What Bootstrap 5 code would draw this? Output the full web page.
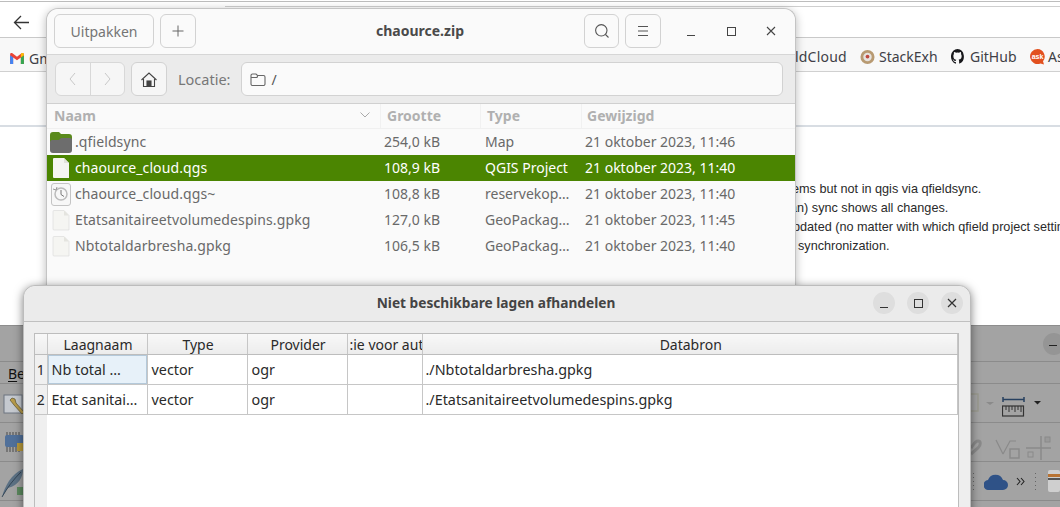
<!DOCTYPE html>
<html lang="nl">
<head>
<meta charset="utf-8">
<title>chaource.zip</title>
<link href="https://cdn.jsdelivr.net/npm/bootstrap@5.3.0/dist/css/bootstrap.min.css" rel="stylesheet">
<style>
html,body{margin:0;background:#fff;overflow:hidden}
.desk{position:relative;width:1060px;height:507px;overflow:hidden;font-family:"Noto Sans",sans-serif;font-size:14px;color:#3d3d3d}
.b-top{margin-top:1px;height:37px;border-top:1px solid #bdbdbd;background:#fff;border-bottom:1px solid #c9c9c9;padding-left:13px;padding-top:13px}
.b-top svg{display:block}
.b-line{position:absolute;left:225px;right:0;top:6px;height:1px;background:#cfcfcf}
.b-marks{height:34px;background:#f8f8f8;border-bottom:1px solid #d0d0d0;font-size:14px;color:#3f3f46;padding-left:795px;padding-top:4px}
.b-gm{position:absolute;left:10px;top:48px;gap:5px;font-size:14px;color:#3f3f46}
.b-mk{white-space:nowrap;flex:none}
.mk-cloud{width:65px;letter-spacing:.2px}
.mk-stack{width:91px;gap:4px}
.mk-git{width:78px;gap:6px}
.mk-ask{gap:2px}
.b-page{height:55px;background:#fff;border-bottom:2px solid #d8dde3}
.b-text{font-family:"Liberation Sans",sans-serif;font-size:12.67px;line-height:19px;color:#2a2a2a;padding:53px 0 0 790px;white-space:nowrap;height:198px;background:#fff;overflow:hidden}
.l1{margin-left:2px}.l3{margin-left:3px}.l4{margin-left:8px}
.qg{position:absolute;left:0;right:0;top:325px;bottom:0;background:#a3a3a3;border-top:1px solid #8d8d8d}
.qg-row{position:absolute;left:0;right:0;height:1px;background:#8b8b8b}
.r1{top:35px}.r2{top:57px}.r3{top:96px}.r4{top:135px}.r5{top:174px}
.qg-ic{position:absolute}
.ic-tool{left:3px;top:67px}.ic-chip{left:4px;top:105px}.ic-feather{left:1px;top:143px}
.ic-frame{left:969px;top:66px}.ic-ruler{left:1002px;top:70px}.ic-edit{left:971px;top:108px}
.ic-cloud{left:984px;top:147px}.ic-more{left:1016px;top:151px}.ic-dots{left:972px;top:146px}.ic-next{left:1048px;top:143px}
.qg-be{position:absolute;left:8px;top:37px;font-size:14px;color:#111}
.qg-be u{text-decoration-thickness:1px;text-underline-offset:2px}
.qg-min{position:absolute;left:1043px;top:7px;width:22px;height:22px;border-radius:50%;background:#959595}
.qg-min::after{content:"";position:absolute;left:6px;top:12px;width:8px;height:1px;background:#222}
.arch{position:absolute;left:46px;top:8px;width:750px;height:290px;background:#fafafa;border:1px solid #c4c4c4;border-bottom:0;border-radius:12px 12px 0 0;box-shadow:0 2px 10px rgba(0,0,0,.28)}
.a-head{height:46px;border-bottom:1px solid #d6d6d6;padding:5px 4px 0 7px;background:#fafafa;border-radius:12px 12px 0 0}
.a-btn{height:34px;min-width:35px;padding:0;border:1px solid #d2d2d2;border-radius:6px;background:#fafafa;color:#757575;font-size:14px;display:flex;align-items:center;justify-content:center}
.a-wide{width:100px}.a-36{width:36px}.a-gap{margin-left:6px}
.a-home{margin-left:6px;background:#f6f6f6}
.a-title{position:absolute;left:0;right:2px;top:12px;text-align:center;font-weight:700;font-size:14px;color:#4a4a4a;line-height:20px}
.a-wc{width:40px;display:flex;justify-content:center;align-items:center;height:34px}
.a-wc1{margin-left:10px}
.a-tool{height:49px;background:#ebebeb;border-bottom:1px solid #d0d0d0;padding:7px 12px 0 8px;color:#777}
.a-grp{display:flex;width:70px;height:34px;border:1px solid #d8d8d8;border-radius:6px;background:#f6f6f6}
.a-grp span{flex:1;display:flex;align-items:center;justify-content:center}
.a-grp span+span{border-left:1px solid #d8d8d8}
.a-lbl{line-height:34px;margin:0 10px 0 11px;color:#777;font-size:14.5px}
.a-loc{flex:1;height:34px;border:1px solid #d2d2d2;border-radius:6px;background:#fafafa;padding-left:8px;gap:6px;color:#555}
.f-grid{display:grid;grid-template-columns:333px 100px 101px 1fr;align-items:center}
.f-head{height:25px;background:#fafafa;border-bottom:1px solid #f0f0f0;font-weight:700;color:#b0b0b0;font-size:14px}
.f-head>div{height:100%;display:flex;align-items:center;padding-left:6px;padding-bottom:2px;border-left:1px solid #f1f1f1}
.f-head>div:first-child{padding-left:7px;border-left:0;justify-content:space-between;padding-right:10px}
.f-head>div:last-child{padding-left:5px}
.f-row{height:26px;color:#696969;background:#fafafa;white-space:nowrap;padding-bottom:2px}
.f-row.on{background:#4b8501;color:#fff}
.f-name{display:flex;align-items:center;gap:2px;padding-left:2px;height:24px;letter-spacing:.1px}
.f-ic{width:24px;height:24px;flex:none;margin-top:2px}
.f-size{text-align:right;padding-right:40px}
.f-type{padding-left:5px}
.f-date{padding-left:4px}
.dlg{position:absolute;left:23px;top:285px;width:948px;height:230px;background:#eeeeee;border:1px solid #bcbcbc;border-radius:12px 12px 0 0;box-shadow:0 2px 10px rgba(0,0,0,.5)}
.d-head{height:36px;background:#ebebeb;border-bottom:1px solid #c0c0c0;border-radius:12px 12px 0 0;position:relative}
.d-title{text-align:center;font-weight:700;font-size:13.7px;line-height:33px;color:#444;padding-right:2px}
.d-btns{position:absolute;right:7px;top:6px;gap:12px}
.d-btn{width:22px;height:22px;border-radius:50%;background:#dedede;display:flex;align-items:center;justify-content:center}
.d-frame{margin:11px 11px 0 10px;height:190px;background:#fff;border:1px solid #bdbdbd;position:relative}
.d-strip{position:absolute;left:0;top:20px;bottom:0;width:12px;background:#efefef}
.d-tb{position:relative;table-layout:fixed;border-collapse:collapse;width:923px;font-size:14.35px;color:#222}
.d-tb th{height:20px;padding:2px 0 0 2px;font-size:14px;font-weight:400;text-align:center;border-right:1px solid #c6c6c6;border-bottom:1px solid #bdbdbd;background:linear-gradient(#f8f8f8,#ececec);white-space:nowrap;overflow:hidden;color:#2a2a2a;line-height:18px}
.d-tb td{height:30px;padding:0 3px 0 4px;border-right:1px solid #c6c6c6;border-bottom:1px solid #c6c6c6;white-space:nowrap;overflow:hidden;color:#2a2a2a;background:#fff}
.d-tb td:last-child{padding-left:3px}
.d-tb td.rh{background:#f0f0f0;padding:0;text-align:center;font-size:14px}
.d-tb td.sel{background:#e7f1f9;box-shadow:inset 0 0 0 1px #b4c9da}
.c-rh{width:12px}.c-100{width:100px}.c-75{width:75px}
.d-clip{display:block;overflow:hidden;white-space:nowrap;text-align:center}
</style>
</head>
<body>
<div class="desk">
  <div class="b-top">
    <svg width="17" height="15" viewBox="0 0 17 15" fill="none" stroke="#333" stroke-width="1.3"><path d="M16 7.5H2M8 1 1.5 7.5 8 14"/></svg>
  </div>
  <div class="b-line"></div>
  <div class="b-marks d-flex align-items-center">
    <span class="b-mk mk-cloud">ldCloud</span>
    <span class="b-mk mk-stack d-flex align-items-center">
      <svg width="15" height="16" viewBox="0 0 16 16"><circle cx="8" cy="8" r="7.5" fill="#b89a72"/><circle cx="8" cy="8" r="4.5" fill="#e6e3df"/><circle cx="8" cy="7.5" r="2" fill="#c0493f"/></svg>StackExh</span>
    <span class="b-mk mk-git d-flex align-items-center">
      <svg width="13" height="15" viewBox="0 0 16 16" fill="#18181b" preserveAspectRatio="none"><path d="M8 0a8 8 0 0 0-2.500 15.600c.4.100.5-.2.5-.4v-1.400c-2.200.5-2.700-1-2.700-1-.4-.9-.9-1.200-.9-1.200-.7-.5.100-.5.100-.5.800.100 1.200.800 1.200.800.700 1.200 1.900.900 2.300.700.100-.5.300-.9.500-1.100-1.800-.2-3.600-.9-3.600-4 0-.9.300-1.600.800-2.100-.1-.2-.4-1 .100-2.100 0 0 .700-.2 2.200.800a7.600 7.600 0 0 1 4 0c1.500-1 2.200-.8 2.200-.8.400 1.100.200 1.900.100 2.100.500.600.800 1.300.800 2.100 0 3.100-1.900 3.700-3.700 3.900.300.300.600.800.600 1.500v2.200c0 .200.100.500.600.400A8 8 0 0 0 8 0z"/></svg>GitHub</span>
    <span class="b-mk mk-ask d-flex align-items-center">
      <svg width="17" height="17" viewBox="0 0 17 17"><path d="M8.500 1a7.500 7.500 0 1 0 3 14.400l3.500 1-1-3.200A7.500 7.500 0 0 0 8.500 1z" fill="#e2501f"/><text x="8.500" y="11" font-size="7" font-weight="700" fill="#fff" text-anchor="middle" font-family="Liberation Sans, sans-serif">ask</text></svg>As</span>
  </div>
  <div class="b-gm d-flex align-items-center">
    <svg width="14" height="11" viewBox="0 0 15 12"><path d="M0 1.500V12h3.300V5L7.500 8 11.700 5v7H15V1.500C15 .2 13.500-.4 12.500.4L7.500 4 2.500.4C1.500-.4 0 .2 0 1.500z" fill="#ea4335"/><path d="M0 1.500V12h3.300V5L0 2.500z" fill="#4285f4"/><path d="M11.700 12H15V2.500L11.700 5z" fill="#34a853"/><path d="M11.700 5 15 2.500v-1C15 .2 13.500-.4 12.500.4l-.8.600z" fill="#fbbc04"/></svg>
    <span>Gm</span>
  </div>
  <div class="b-page"></div>
  <div class="b-text">
    <div class="l1">ems but not in qgis via qfieldsync.</div>
    <div>an) sync shows all changes.</div>
    <div class="l3">pdated (no matter with which qfield project settin</div>
    <div class="l4">synchronization.</div>
  </div>

  <div class="qg">
    <div class="qg-min"></div>
    <div class="qg-row r1"></div>
    <div class="qg-row r2"></div>
    <div class="qg-row r3"></div>
    <div class="qg-row r4"></div>
    <div class="qg-row r5"></div>
    <div class="qg-be"><u>B</u>e</div>
    <svg class="qg-ic ic-tool" width="22" height="24" viewBox="0 0 22 24"><rect x="1" y="2" width="18" height="18" fill="#c5c9cf" stroke="#6d7480"/><path d="M7 7l4 5 8 9 2-2-8-9-1-4-3-1z" fill="#b79b4a" stroke="#5c5330" stroke-width=".7"/></svg>
    <svg class="qg-ic ic-chip" width="20" height="24" viewBox="0 0 20 24"><path d="M3 1v20M6 1v20M9 1v20M12 1v20M15 1v20" stroke="#333" stroke-width=".8"/><rect x="1" y="4" width="19" height="12" rx="2" fill="#50709a"/><rect x="13" y="12" width="7" height="8" fill="#b99a3a"/></svg>
    <svg class="qg-ic ic-feather" width="22" height="32" viewBox="0 0 22 32"><path d="M1 28C4 17 10 5 22 0c0 8-4 16-15 19z" fill="#5c7184"/><path d="M1 28C6 19 12 11 20 3" stroke="#2a3a4a" stroke-width=".8" fill="none"/><rect x="16" y="18" width="6" height="8" fill="#5c8a5f"/></svg>
    <svg class="qg-ic ic-frame" width="32" height="24" viewBox="0 0 32 24" fill="none"><rect x="0" y="2" width="9" height="17" stroke="#9a9a8f" stroke-width="1.500"/><path d="M17 10h8l-4 3z" fill="#8a8a8a"/></svg>
    <svg class="qg-ic ic-ruler" width="40" height="22" viewBox="0 0 40 22"><path d="M1 1v5M22 1v5M1 3.500h21" stroke="#27405f" stroke-width="1.500"/><rect x="0.500" y="10" width="21" height="10" fill="none" stroke="#333" stroke-width="1.200"/><path d="M4 10v4M7 10v6M10 10v4M13 10v6M16 10v4M19 10v6" stroke="#333"/><path d="M32 5h7l-3.500 3.500z" fill="#222"/></svg>
    <svg class="qg-ic ic-edit" width="90" height="30" viewBox="0 0 90 30" fill="none" stroke="#8a8a8a"><path d="M0 14c3-4 4-7 7-7 3 0 3 4 0 7l-7 6" stroke-width="3"/><path d="M25 6l7 14M32 20l7-13h6" stroke-width="1.200"/><rect x="39" y="15" width="9" height="9" stroke-width="1.500"/><path d="M70 2v24M55 14h25" stroke-width="1.500"/><rect x="74" y="3" width="5" height="5" fill="#999"/><rect x="57" y="18" width="5" height="5"/></svg>
    <svg class="qg-ic ic-cloud" width="24" height="17" viewBox="0 0 24 17"><path d="M5 17a5 5 0 0 1-1-10 8 8 0 0 1 15 0 5 5 0 0 1 0 10z" fill="#2f5287"/></svg>
    <svg class="qg-ic ic-more" width="9" height="9" viewBox="0 0 9 9" fill="none" stroke="#222" stroke-width="1.100"><path d="M1 1l3 3.500L1 8M5 1l3 3.500L5 8"/></svg>
    <svg class="qg-ic ic-dots" width="68" height="20" viewBox="0 0 68 20" fill="#666"><path d="M1 1h1v1H1zM1 5h1v1H1zM1 9h1v1H1zM1 13h1v1H1zM1 17h1v1H1zM63 1h1v1h-1zM63 5h1v1h-1zM63 9h1v1h-1zM63 13h1v1h-1zM63 17h1v1h-1z"/></svg>
    <svg class="qg-ic ic-next" width="12" height="24" viewBox="0 0 12 24"><rect x="0" y="1" width="12" height="22" rx="2" fill="#cfcfcf"/><rect x="0" y="5" width="12" height="3" fill="#b87333"/><rect x="0" y="9" width="12" height="2" fill="#555"/></svg>
  </div>

  <section class="arch">
    <div class="a-head d-flex position-relative">
      <div class="a-title">chaource.zip</div>
      <button class="btn a-btn a-wide position-relative">Uitpakken</button>
      <button class="btn a-btn a-36 a-gap position-relative"><svg width="12" height="12" viewBox="0 0 12 12" stroke="#666"><path d="M6 .5v11M.5 6h11"/></svg></button>
      <div class="ms-auto d-flex position-relative">
        <button class="btn a-btn"><svg width="16" height="16" viewBox="0 0 16 16" fill="none" stroke="#555" stroke-width="1.100"><circle cx="7.300" cy="7.300" r="5.700"/><path d="M11.500 11.500 14.500 14.500"/></svg></button>
        <button class="btn a-btn a-36 a-gap"><svg width="12" height="10" viewBox="0 0 12 10" stroke="#555"><path d="M1 .5h10M1 5h10M1 9.500h10"/></svg></button>
        <div class="a-wc a-wc1"><svg width="10" height="10" viewBox="0 0 10 10" stroke="#444"><path d="M1 9.500h8"/></svg></div>
        <div class="a-wc"><svg width="9" height="9" viewBox="0 0 9 9" fill="none" stroke="#444"><rect x=".5" y=".5" width="8" height="8"/></svg></div>
        <div class="a-wc"><svg width="10" height="10" viewBox="0 0 10 10" stroke="#444" stroke-width="1.100"><path d="M1 1l8 8M9 1l-8 8"/></svg></div>
      </div>
    </div>
    <div class="a-tool d-flex align-items-start">
      <div class="a-grp"><span><svg width="7" height="14" viewBox="0 0 7 14" fill="none" stroke="#c8c8c8"><path d="M6 1 1 7l5 6"/></svg></span><span><svg width="7" height="14" viewBox="0 0 7 14" fill="none" stroke="#c8c8c8"><path d="M1 1l5 6-5 6"/></svg></span></div>
      <button class="btn a-btn a-36 a-home"><svg width="16" height="15" viewBox="0 0 16 15" fill="none" stroke="#444" stroke-width="1.100"><path d="M.5 8 8 1l7.500 7M2.500 7v7.500h11V7"/><rect x="6" y="9" width="4" height="5.500" fill="#444"/></svg></button>
      <span class="a-lbl">Locatie:</span>
      <div class="a-loc d-flex align-items-center"><svg width="16" height="13" viewBox="0 0 16 13" fill="none" stroke="#666" stroke-width="1.100"><path d="M1 2.500A1.500 1.500 0 0 1 2.500 1H6l1.500 1.500h6A1.500 1.500 0 0 1 15 4v7a1.500 1.500 0 0 1-1.500 1.500h-11A1.500 1.500 0 0 1 1 11z"/><path d="M1 4.500h6l.8-2"/></svg><span>/</span></div>
    </div>
    <div class="f-grid f-head"><div>Naam<svg width="10" height="6" viewBox="0 0 10 6" fill="none" stroke="#aaa"><path d="M.5.500 5 5 9.500.5"/></svg></div><div>Grootte</div><div>Type</div><div>Gewijzigd</div></div>
    <div class="f-grid f-row">
      <div class="f-name"><svg class="f-ic" viewBox="0 0 24 24"><path d="M1 5a3 3 0 0 1 3-3h6l2 2h8a3 3 0 0 1 3 3v6H1z" fill="#5a8a1c"/><path d="M1 12c0-1 1-2 2-2h6c2 0 2-2 4-2h8a2 2 0 0 1 2 2v10a3 3 0 0 1-3 3H4a3 3 0 0 1-3-3z" fill="#6d6d6d"/></svg><span>.qfieldsync</span></div>
      <div class="f-size">254,0 kB</div><div class="f-type">Map</div><div class="f-date">21 oktober 2023, 11:46</div>
    </div>
    <div class="f-grid f-row on">
      <div class="f-name"><svg class="f-ic" viewBox="0 0 24 24"><path d="M5 2h10l5 5v15H5a1 1 0 0 1-1-1V3a1 1 0 0 1 1-1z" fill="#f5f5f1"/><path d="M15 2l5 5h-5z" fill="#e2e2dc"/></svg><span>chaource_cloud.qgs</span></div>
      <div class="f-size">108,9 kB</div><div class="f-type">QGIS Project</div><div class="f-date">21 oktober 2023, 11:40</div>
    </div>
    <div class="f-grid f-row">
      <div class="f-name"><svg class="f-ic" viewBox="0 0 24 24" fill="none"><rect x="2.500" y="1.500" width="19" height="22" rx="2.500" fill="#f7f7f7" stroke="#c4c4c4"/><circle cx="12" cy="12" r="6" stroke="#bbb" stroke-width="1.500"/><path d="M12 8v4.500l3 2" stroke="#777"/><path d="M4 7l3 1 1-3" stroke="#999"/></svg><span>chaource_cloud.qgs~</span></div>
      <div class="f-size">108,8 kB</div><div class="f-type">reservekop…</div><div class="f-date">21 oktober 2023, 11:40</div>
    </div>
    <div class="f-grid f-row">
      <div class="f-name"><svg class="f-ic" viewBox="0 0 24 24"><path d="M5 2.500h10l5 5V22H5a1 1 0 0 1-1-1V3.500a1 1 0 0 1 1-1z" fill="#f5f5f2" stroke="#dcdcdc" stroke-width=".7"/><path d="M15 2.500l5 5h-5z" fill="#e4e4df"/></svg><span>Etatsanitaireetvolumedespins.gpkg</span></div>
      <div class="f-size">127,0 kB</div><div class="f-type">GeoPackag…</div><div class="f-date">21 oktober 2023, 11:45</div>
    </div>
    <div class="f-grid f-row">
      <div class="f-name"><svg class="f-ic" viewBox="0 0 24 24"><path d="M5 2.500h10l5 5V22H5a1 1 0 0 1-1-1V3.500a1 1 0 0 1 1-1z" fill="#f5f5f2" stroke="#dcdcdc" stroke-width=".7"/><path d="M15 2.500l5 5h-5z" fill="#e4e4df"/></svg><span>Nbtotaldarbresha.gpkg</span></div>
      <div class="f-size">106,5 kB</div><div class="f-type">GeoPackag…</div><div class="f-date">21 oktober 2023, 11:40</div>
    </div>
  </section>

  <section class="dlg">
    <div class="d-head">
      <div class="d-title">Niet beschikbare lagen afhandelen</div>
      <div class="d-btns d-flex">
        <div class="d-btn"><svg width="10" height="10" viewBox="0 0 10 10" stroke="#333"><path d="M1 9.500h8"/></svg></div>
        <div class="d-btn"><svg width="9" height="9" viewBox="0 0 9 9" fill="none" stroke="#333"><rect x=".5" y=".5" width="8" height="8"/></svg></div>
        <div class="d-btn"><svg width="10" height="10" viewBox="0 0 10 10" stroke="#333" stroke-width="1.200"><path d="M1 1l8 8M9 1l-8 8"/></svg></div>
      </div>
    </div>
    <div class="d-frame">
      <div class="d-strip"></div>
      <table class="d-tb">
        <colgroup><col class="c-rh"><col class="c-100"><col class="c-100"><col class="c-100"><col class="c-75"><col></colgroup>
        <thead><tr><th></th><th>Laagnaam</th><th>Type</th><th>Provider</th><th><span class="d-clip">:ie voor aut</span></th><th>Databron</th></tr></thead>
        <tbody>
          <tr><td class="rh">1</td><td class="sel">Nb total …</td><td>vector</td><td>ogr</td><td></td><td>./Nbtotaldarbresha.gpkg</td></tr>
          <tr><td class="rh">2</td><td>Etat sanitai…</td><td>vector</td><td>ogr</td><td></td><td>./Etatsanitaireetvolumedespins.gpkg</td></tr>
        </tbody>
      </table>
    </div>
  </section>
</div>
<script src="https://cdn.jsdelivr.net/npm/bootstrap@5.3.0/dist/js/bootstrap.bundle.min.js"></script>
</body>
</html>
